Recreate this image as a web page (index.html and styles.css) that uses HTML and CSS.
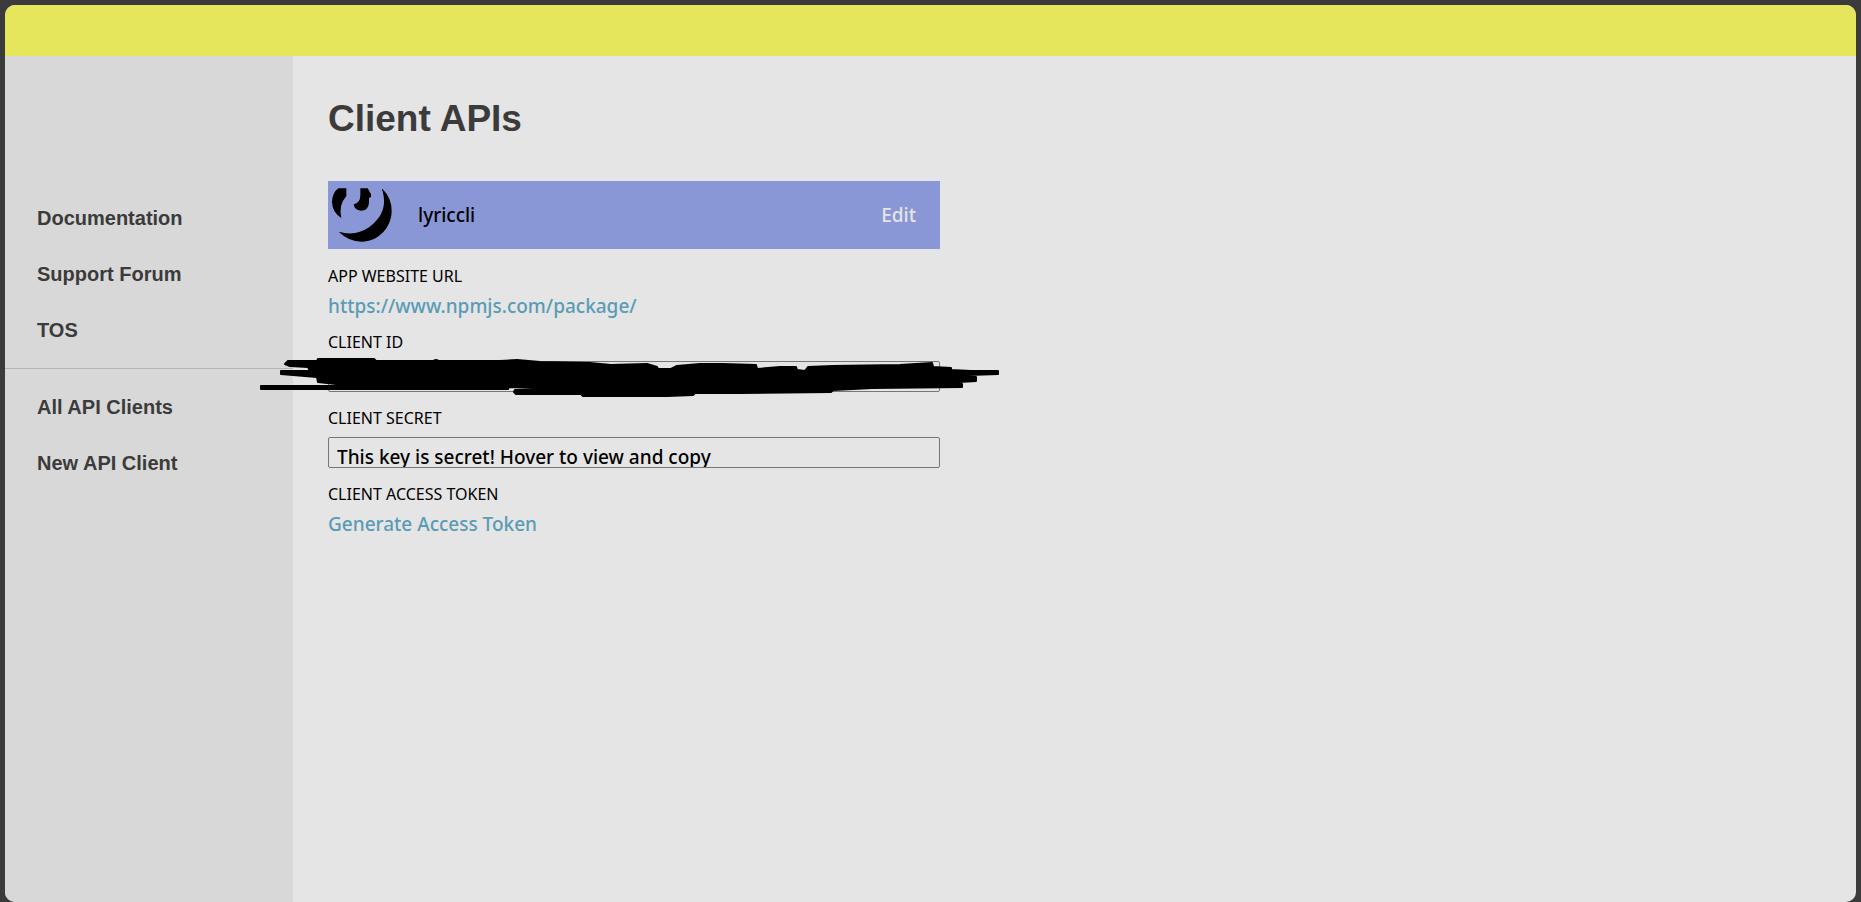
FILE: index.html
```html
<!DOCTYPE html>
<html lang="en">
<head>
<meta charset="utf-8">
<title>Client APIs</title>
<link rel="stylesheet" href="styles.css">
</head>
<body>
<div class="window">
  <header class="topbar"></header>
  <div class="body">
    <nav class="sidebar">
      <ul class="nav-group">
        <li><a href="#">Documentation</a></li>
        <li><a href="#">Support Forum</a></li>
        <li><a href="#">TOS</a></li>
      </ul>
      <ul class="nav-group">
        <li><a href="#">All API Clients</a></li>
        <li><a href="#">New API Client</a></li>
      </ul>
    </nav>
    <main class="content">
      <h1>Client APIs</h1>
      <section class="client">
        <div class="client-head">
          <svg class="logo" viewBox="9 3 204 204" aria-hidden="true">
            <path d="M40 25H64V48Q40 75 49 114Q22 98 21 66Q22 38 40 25Z"/>
            <path d="M106 25H128L138 43V52L132 53V68Q130 92 108 92Q88 90 86 73Q106 69 106 46Z"/>
            <path d="M172 26Q200 54 200 92C200 142 160 185 110 185Q70 184 41 155Q92 170 132 142C176 110 185 72 171 28Z"/>
          </svg>
          <span class="client-name">lyriccli</span>
          <a class="edit" href="#">Edit</a>
        </div>
        <div class="field">
          <h2>APP WEBSITE URL</h2>
          <a class="link" href="#">https://www.npmjs.com/package/</a>
        </div>
        <div class="field boxed">
          <label for="client-id">CLIENT ID</label>
          <div class="input-wrap">
            <input id="client-id" type="text" readonly>
            <svg class="scribble" viewBox="258 356 744 44" aria-hidden="true">
              <path d="M318 359H374L376 361H433L436 360L439 361H500L517 360L540 362L590 363L611 365L647 364L657 367L658 369H671L677 366L700 364H723L756 365L757 369L780 367H796L797 370L805 371L808 367L833 366L900 365L932 363L933 367L951 368V370L971 371H998V374L968 375L945 377H976V381L942 383V384H962V387L872 388L833 390L831 392L740 393H695L693 395L667 396H583L581 394H516L514 392L515 390L548 389L533 388L509 387L508 389H261V386H337L336 384L318 382L317 377L281 374V371H310L308 367L290 366L285 364L288 361L317 361Z"/>
            </svg>
          </div>
        </div>
        <div class="field boxed">
          <label for="client-secret">CLIENT SECRET</label>
          <input id="client-secret" type="text" readonly value="This key is secret! Hover to view and copy">
        </div>
        <div class="field">
          <h2>CLIENT ACCESS TOKEN</h2>
          <a class="link" href="#">Generate Access Token</a>
        </div>
      </section>
    </main>
  </div>
</div>
</body>
</html>
```
FILE: styles.css
```css
* { box-sizing: border-box; }

body {
  margin: 0;
  padding: 5px 5px 0;
  background: #3b3b3b;
  color: #000;
  font: 500 19px/28px "Noto Sans", sans-serif;
}

a { text-decoration: none; }

.window {
  display: flex;
  flex-direction: column;
  min-height: calc(100vh - 5px);
  border-radius: 10px;
  overflow: hidden;
  background: #e5e5e5;
}

.topbar {
  height: 51px;
  background: #e5e65c;
}

.body {
  display: flex;
  flex: 1;
}

.sidebar {
  flex: none;
  width: 288px;
  padding-top: 134px;
  background: #d8d8d8;
  font: bold 20px/56px "Liberation Sans", Arial, sans-serif;
}

.nav-group {
  margin: 0;
  padding: 0 32px;
  list-style: none;
}

.nav-group + .nav-group {
  margin-top: 10px;
  padding-top: 10px;
  border-top: 1px solid #b4b4b4;
}

.nav-group a {
  display: block;
  color: #3b3b3b;
}

.content {
  flex: 1;
  padding: 39px 35px;
}

h1 {
  margin: 0 0 38px;
  color: #3b3b3b;
  font: bold 37px/48px "Liberation Sans", Arial, sans-serif;
}

.client { max-width: 612px; }

.client-head {
  display: flex;
  align-items: center;
  height: 68px;
  margin-bottom: 15px;
  padding-right: 24px;
  background: #8a97d6;
}

.logo {
  width: 68px;
  height: 68px;
}

.client-name {
  flex: 1;
  padding-left: 22px;
}

.edit { color: #e5e5e5; }

.field { margin-bottom: 10px; }

.boxed { margin-bottom: 14px; }

.field h2,
.field label {
  display: block;
  margin: 0 0 4px;
  font-size: 16px;
  font-weight: 400;
  line-height: 24px;
}

.link {
  display: block;
  color: #5a9bb5;
}

.input-wrap { position: relative; }

.field input {
  display: block;
  width: 100%;
  height: 31px;
  margin-top: 7px;
  padding: 8px 8px 0;
  border: 1px solid #767676;
  border-radius: 2px;
  background: transparent;
  color: #000;
  font: inherit;
  line-height: 21px;
}

.scribble {
  position: absolute;
  top: -5px;
  left: -70px;
  width: 744px;
  height: 44px;
}

.scribble path {
  stroke: #000;
  stroke-width: 2;
  stroke-linejoin: round;
}
```
